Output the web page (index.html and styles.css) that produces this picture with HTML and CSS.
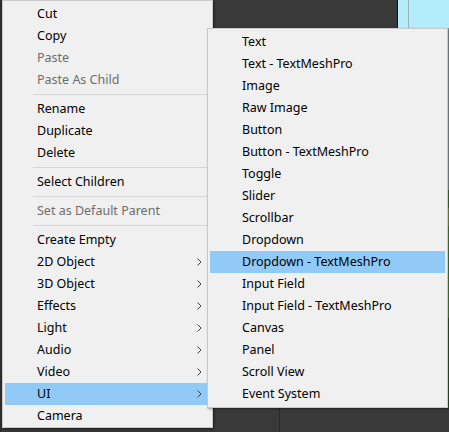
FILE: index.html
```html
<!DOCTYPE html>
<html>
<head>
<meta charset="utf-8">
<link rel="stylesheet" href="styles.css">
</head>
<body>
<div class="screen">
  <div class="bg-strip-left"></div>
  <div class="bg-cyan"><div class="bg-cyan-line"></div></div>
  <div class="bg-right-edge"></div>
  <div class="bg-bottom-line"></div>

  <div class="menu main">
    <div class="item">Cut</div>
    <div class="item">Copy</div>
    <div class="item disabled">Paste</div>
    <div class="item disabled">Paste As Child</div>
    <div class="sep"></div>
    <div class="item">Rename</div>
    <div class="item">Duplicate</div>
    <div class="item">Delete</div>
    <div class="sep"></div>
    <div class="item">Select Children</div>
    <div class="sep"></div>
    <div class="item disabled">Set as Default Parent</div>
    <div class="sep"></div>
    <div class="item">Create Empty</div>
    <div class="item sub-item">2D Object<svg class="chev" width="5" height="8" viewBox="0 0 5 8"><path d="M0.5 0.5 L4 4 L0.5 7.5" fill="none" stroke="#404040" stroke-width="1"/></svg></div>
    <div class="item sub-item">3D Object<svg class="chev" width="5" height="8" viewBox="0 0 5 8"><path d="M0.5 0.5 L4 4 L0.5 7.5" fill="none" stroke="#404040" stroke-width="1"/></svg></div>
    <div class="item sub-item">Effects<svg class="chev" width="5" height="8" viewBox="0 0 5 8"><path d="M0.5 0.5 L4 4 L0.5 7.5" fill="none" stroke="#404040" stroke-width="1"/></svg></div>
    <div class="item sub-item">Light<svg class="chev" width="5" height="8" viewBox="0 0 5 8"><path d="M0.5 0.5 L4 4 L0.5 7.5" fill="none" stroke="#404040" stroke-width="1"/></svg></div>
    <div class="item sub-item">Audio<svg class="chev" width="5" height="8" viewBox="0 0 5 8"><path d="M0.5 0.5 L4 4 L0.5 7.5" fill="none" stroke="#404040" stroke-width="1"/></svg></div>
    <div class="item sub-item">Video<svg class="chev" width="5" height="8" viewBox="0 0 5 8"><path d="M0.5 0.5 L4 4 L0.5 7.5" fill="none" stroke="#404040" stroke-width="1"/></svg></div>
    <div class="item sub-item active">UI<svg class="chev" width="5" height="8" viewBox="0 0 5 8"><path d="M0.5 0.5 L4 4 L0.5 7.5" fill="none" stroke="#404040" stroke-width="1"/></svg></div>
    <div class="item">Camera</div>
  </div>

  <div class="menu submenu">
    <div class="item">Text</div>
    <div class="item">Text - TextMeshPro</div>
    <div class="item">Image</div>
    <div class="item">Raw Image</div>
    <div class="item">Button</div>
    <div class="item">Button - TextMeshPro</div>
    <div class="item">Toggle</div>
    <div class="item">Slider</div>
    <div class="item">Scrollbar</div>
    <div class="item">Dropdown</div>
    <div class="item active">Dropdown - TextMeshPro</div>
    <div class="item">Input Field</div>
    <div class="item">Input Field - TextMeshPro</div>
    <div class="item">Canvas</div>
    <div class="item">Panel</div>
    <div class="item">Scroll View</div>
    <div class="item">Event System</div>
  </div>
</div>
</body>
</html>
```
FILE: styles.css
```css
html, body {
  margin: 0;
  padding: 0;
}
body {
  background: #393939;
  width: 449px;
  height: 432px;
  overflow: hidden;
}
.screen {
  position: relative;
  width: 449px;
  height: 432px;
  background: #393939;
}
.bg-strip-left {
  position: absolute;
  left: 0;
  top: 0;
  width: 2px;
  height: 432px;
  background: #2e2e2e;
}
.bg-cyan {
  position: absolute;
  left: 397px;
  top: 0;
  width: 52px;
  height: 200px;
  background: #b2edf9;
  border-left: 1px solid #151515;
}
.bg-cyan-line {
  position: absolute;
  left: 10px;
  top: 0;
  width: 1px;
  height: 100%;
  background: #9fb3b6;
}
.bg-right-edge {
  position: absolute;
  left: 448px;
  top: 28px;
  width: 1px;
  height: 380px;
  background: linear-gradient(#8aa0a8 0 162px, #3f7a2a 162px 180px, #8a9a3a 180px 198px, #4f8a32 198px 290px, #2f5a22 290px);
}
.bg-bottom-line {
  position: absolute;
  left: 279px;
  top: 407px;
  width: 1px;
  height: 25px;
  background: #2a2a2a;
}
.menu {
  background: #f0f0f0;
  border: 1px solid #c9c9c9;
  font-family: "Segoe UI", "Noto Sans", "Open Sans", sans-serif;
  font-size: 12.5px;
  color: #000;
  box-sizing: border-box;
}
.main {
  position: relative;
  margin-left: 2px;
  width: 211px;
  padding: 2px 2px 0 2px;
  box-shadow: 1px 1px 2px rgba(0,0,0,0.5);
}
.submenu {
  position: absolute;
  left: 207px;
  top: 28px;
  width: 241px;
  padding: 2px;
  box-shadow: 1px 1px 2px rgba(0,0,0,0.4);
}
.item {
  height: 22px;
  line-height: 22px;
  padding-left: 32px;
  white-space: nowrap;
  display: flex;
  align-items: center;
  justify-content: space-between;
}
.item.disabled {
  color: #6d6d6d;
}
.item.active {
  background: #91c9f7;
}
.chev {
  margin-right: 8px;
}
.sep {
  height: 7px;
  margin-left: 28px;
  display: flex;
  align-items: center;
}
.sep::before {
  content: "";
  display: block;
  width: 100%;
  height: 1px;
  background: #d7d7d7;
}
```
